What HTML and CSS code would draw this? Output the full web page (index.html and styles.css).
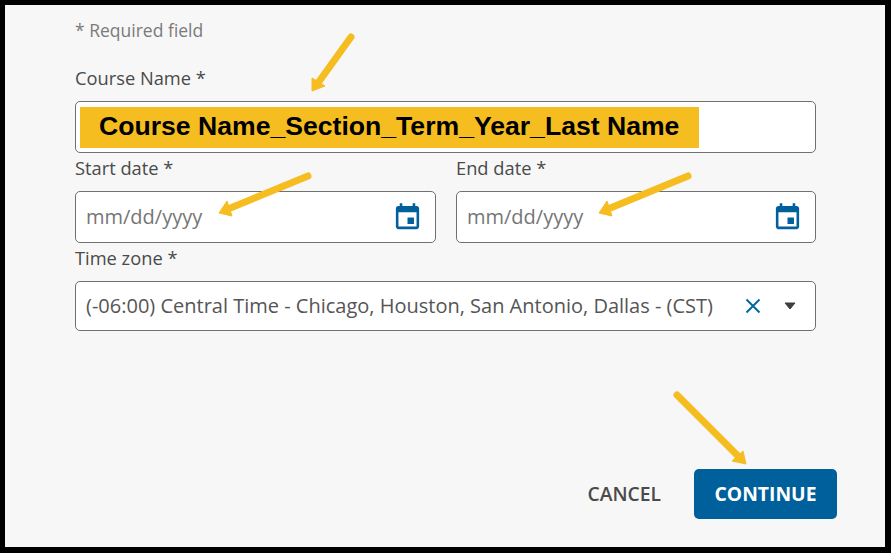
FILE: index.html
```html
<!DOCTYPE html>
<html lang="en">
<head>
<meta charset="utf-8">
<title>Course details</title>
<link rel="stylesheet" href="styles.css">
</head>
<body>
<main class="frame">
  <p class="required-note">* Required field</p>
  <form class="form">
    <div class="field">
      <label class="label">Course Name *</label>
      <div class="control control-name"><span class="highlight">Course Name_Section_Term_Year_Last Name</span></div>
    </div>
    <div class="date-row">
      <div class="field">
        <label class="label">Start date *</label>
        <div class="control control-date">
          <span class="placeholder">mm/dd/yyyy</span>
          <svg class="icon-calendar" viewBox="0 0 24 24"><path d="M17 12h-5v5h5v-5zM16 1v2H8V1H6v2H5c-1.11 0-1.99.9-1.99 2L3 19c0 1.1.89 2 2 2h14c1.1 0 2-.9 2-2V5c0-1.1-.9-2-2-2h-1V1h-2zm3 18H5V8h14v11z"/></svg>
        </div>
      </div>
      <div class="field">
        <label class="label">End date *</label>
        <div class="control control-date">
          <span class="placeholder">mm/dd/yyyy</span>
          <svg class="icon-calendar" viewBox="0 0 24 24"><path d="M17 12h-5v5h5v-5zM16 1v2H8V1H6v2H5c-1.11 0-1.99.9-1.99 2L3 19c0 1.1.89 2 2 2h14c1.1 0 2-.9 2-2V5c0-1.1-.9-2-2-2h-1V1h-2zm3 18H5V8h14v11z"/></svg>
        </div>
      </div>
    </div>
    <div class="field">
      <label class="label">Time zone *</label>
      <div class="control control-zone">
        <span class="zone-value">(-06:00) Central Time - Chicago, Houston, San Antonio, Dallas - (CST)</span>
        <svg class="icon-clear" viewBox="0 0 16 16"><path d="M1.5 1.5 14.5 14.5M14.5 1.5 1.5 14.5"/></svg>
        <svg class="icon-caret" viewBox="0 0 12 8"><path d="M1 1h10L6 7z"/></svg>
      </div>
    </div>
  </form>
  <div class="actions">
    <button class="btn btn-text" type="button">CANCEL</button>
    <button class="btn btn-primary" type="button">CONTINUE</button>
  </div>
  <svg class="annotations" viewBox="0 0 891 553">
    <g class="arrow-line">
      <path d="M351 37 318 83"/>
      <path d="M308 176 228 209"/>
      <path d="M688 176 608 209"/>
      <path d="M677 395 738 456"/>
    </g>
    <g class="arrow-head">
      <path d="M312 91 312 78 325 86z"/>
      <path d="M219 213 227 201 232 216z"/>
      <path d="M599 213 607 201 612 216z"/>
      <path d="M746 464 743 451 732 461z"/>
    </g>
  </svg>
</main>
</body>
</html>
```
FILE: styles.css
```css
* { box-sizing: border-box; }
html, body { margin: 0; padding: 0; }
body { font-family: "Open Sans", "Noto Sans", sans-serif; color: #4a4a4a; }
.frame {
  position: relative;
  width: 891px;
  height: 553px;
  background: #f7f7f7;
  border-style: solid;
  border-color: #000;
  border-width: 5px 6px 6px 5px;
  padding: 13px 69px 0 70px;
  overflow: hidden;
}
.required-note {
  margin: 0;
  height: 24px;
  font-size: 17.5px;
  line-height: 24px;
  color: #7a7a7a;
}
.form { display: flex; flex-direction: column; margin-top: 24px; }
.field { display: flex; flex-direction: column; }
.label {
  display: block;
  height: 24px;
  margin: 0 0 11px;
  font-size: 18.3px;
  line-height: 24px;
  color: #4a4a4a;
}
.form > .field + .date-row, .date-row + .field { margin-top: 3px; }
.date-row { display: grid; grid-template-columns: 361px 360px; gap: 20px; }
.control {
  display: flex;
  align-items: center;
  background: #fff;
  border: 1px solid #707070;
  border-radius: 5px;
}
.control-name { height: 52px; padding: 0 0 0 4px; }
.highlight {
  display: block;
  width: 619px;
  height: 41px;
  padding-left: 19px;
  background: #f5bd20;
  color: #000;
  font-family: "Liberation Sans", Arial, sans-serif;
  font-weight: 700;
  font-size: 26.6px;
  line-height: 39px;
  white-space: nowrap;
}
.control-date { height: 52px; padding: 0 12px 0 10px; justify-content: space-between; }
.placeholder { font-size: 20px; line-height: 24px; color: #767676; }
.icon-calendar { width: 31px; height: 31px; fill: #00609c; }
.control-zone { height: 50px; padding: 0 19px 0 10px; }
.zone-value { flex: 1; font-size: 20px; line-height: 24px; color: #555; white-space: nowrap; }
.icon-clear { width: 16px; height: 16px; margin-right: 23px; fill: none; stroke: #00699f; stroke-width: 2; }
.icon-caret { width: 12px; height: 8px; margin-top: -1px; fill: #3f3f3f; stroke: #3f3f3f; stroke-width: 1; stroke-linejoin: round; }
.actions {
  display: flex;
  justify-content: flex-end;
  align-items: center;
  gap: 33px;
  margin-top: 138px;
  margin-right: -21px;
}
.btn {
  font-family: "Open Sans", "Noto Sans", sans-serif;
  font-size: 19.3px;
  font-weight: 600;
  line-height: 26px;
  border: 0;
  border-radius: 5px;
  padding: 0;
  height: 50px;
  background: none;
}
.btn-text { color: #4a4a4a; }
.btn-primary { width: 143px; background: #00609c; color: #fff; font-weight: 700; }
.annotations { position: absolute; left: -5px; top: -5px; width: 891px; height: 553px; pointer-events: none; }
.arrow-line { fill: none; stroke: #f5bd20; stroke-width: 7; stroke-linecap: round; }
.arrow-head { fill: #f5bd20; stroke: #f5bd20; stroke-width: 1; stroke-linejoin: round; }
```
